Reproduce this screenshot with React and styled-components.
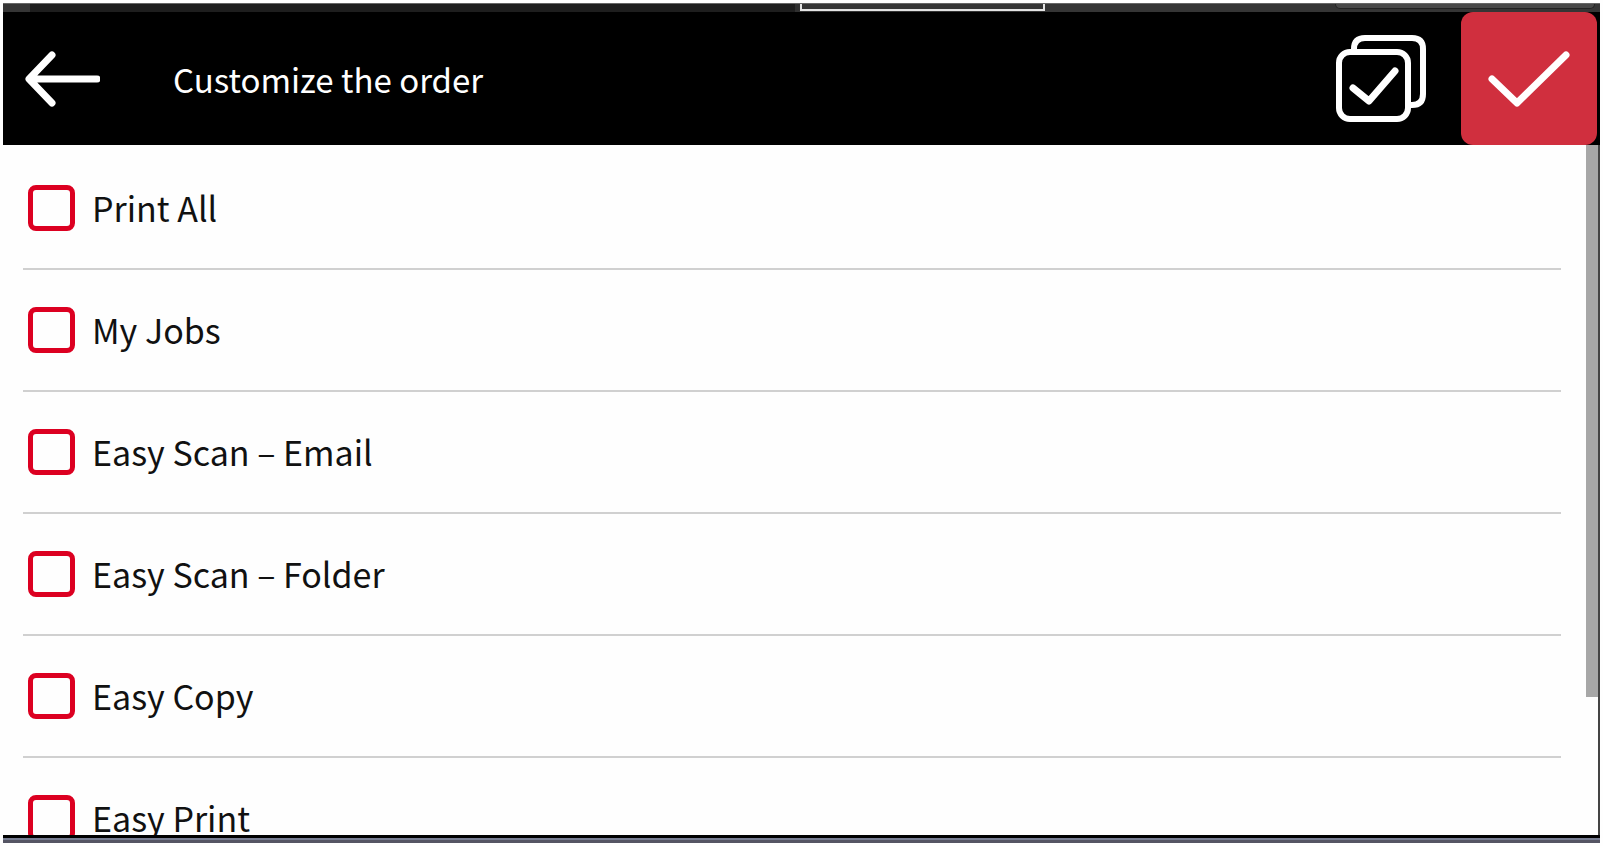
import { useState } from "react";
import styled, { createGlobalStyle } from "styled-components";

const GlobalStyle = createGlobalStyle`
  * {
    box-sizing: border-box;
  }

  body {
    margin: 0;
    background-color: #fefefe;
    font-family: "Noto Sans CJK JP", "Noto Sans", sans-serif;
  }
`;

const StyledScreen = styled.div`
  display: flex;
  flex-direction: column;
  height: 100vh;
  padding: 3px;
`;

const StyledStatusStrip = styled.div`
  display: flex;
  flex: none;
  height: 9px;
  background-color: #353535;
  border-top: 1px solid #666;
`;

const StyledStripPart = styled.div`
  flex: ${({ $grow }) => $grow} 1 0;
  background-color: ${({ $color }) => $color};
`;

const StyledStripTab = styled(StyledStripPart)`
  height: 7px;
  border: 2px solid #e4e4e4;
  border-top: none;
`;

const StyledStripPill = styled(StyledStripPart)`
  height: 5px;
  border: 1px solid #222;
  border-top: none;
  border-radius: 0 0 6px 6px;
`;

const StyledHeader = styled.header`
  display: flex;
  align-items: center;
  flex: none;
  height: 133px;
  padding-right: 3px;
  background-color: #000;
`;

const HeaderButton = styled.button`
  display: flex;
  align-items: center;
  justify-content: center;
  flex: none;
  width: ${({ $width }) => $width}px;
  height: 133px;
  padding: 0;
  border: none;
  border-radius: 12px;
  background-color: ${({ $primary }) => ($primary ? "#d02f3e" : "transparent")};
  cursor: pointer;
`;

const StyledIcon = styled.svg`
  display: block;
  fill: none;
  stroke: #fff;
  stroke-linecap: round;
  stroke-linejoin: round;
`;

const StyledTitle = styled.h1`
  flex: 1;
  margin: 0;
  padding-left: 53px;
  color: #fff;
  font-size: 33px;
  font-weight: 400;
  line-height: 48px;
`;

const StyledContent = styled.main`
  display: flex;
  flex: 1;
  min-height: 0;
  border-right: 2px solid #444;
  background-color: #fefefe;
`;

const StyledList = styled.ul`
  flex: 1;
  margin: 0;
  padding: 3px 25px 0 20px;
  overflow: hidden;
  list-style: none;
`;

const StyledRow = styled.li`
  height: 122px;
  border-bottom: 2px solid #d0d0d0;
`;

const StyledLabel = styled.label`
  display: flex;
  align-items: center;
  gap: 17px;
  height: 100%;
  padding-left: 5px;
  color: #111;
  font-size: 34px;
  line-height: 48px;
  cursor: pointer;
`;

const StyledCheckbox = styled.input`
  appearance: none;
  width: 47px;
  height: 46px;
  margin: 0;
  border: 5px solid #dc0021;
  border-radius: 8px;
  background-color: #fefefe;

  &:checked {
    background-color: #dc0021;
  }
`;

const StyledScrollTrack = styled.div`
  flex: none;
  width: 12px;
`;

const StyledScrollThumb = styled.div`
  height: 80%;
  background-color: #a7a7a7;
`;

const StyledFooter = styled.footer`
  flex: none;
  height: 8px;
  border-top: 3px solid #000;
  border-bottom: 3px solid #555564;
  background-color: #777d92;
`;

const apps = [
  "Print All",
  "My Jobs",
  "Easy Scan – Email",
  "Easy Scan – Folder",
  "Easy Copy",
  "Easy Print",
];

const App = () => {
  const [selected, setSelected] = useState([]);

  const toggle = (name) => {
    setSelected((prev) =>
      prev.includes(name) ? prev.filter((n) => n !== name) : [...prev, name]
    );
  };

  const toggleAll = () => {
    setSelected((prev) => (prev.length === apps.length ? [] : apps));
  };

  return (
    <StyledScreen>
      <GlobalStyle />
      <StyledStatusStrip>
        <StyledStripPart $grow={27} $color="#353535" />
        <StyledStripPart $grow={766} $color="#1e1e1e" />
        <StyledStripPart $grow={5} $color="#303030" />
        <StyledStripTab $grow={242} $color="#353535" />
        <StyledStripPart $grow={290} $color="#353535" />
        <StyledStripPill $grow={259} $color="#484848" />
        <StyledStripPart $grow={5} $color="#353535" />
      </StyledStatusStrip>
      <StyledHeader>
        <HeaderButton $width={117} aria-label="Back">
          <StyledIcon width="76" height="56" viewBox="0 0 76 56" strokeWidth="7">
            <path d="M28 4 L5 28 L28 52 M6 28 H73" />
          </StyledIcon>
        </HeaderButton>
        <StyledTitle>Customize the order</StyledTitle>
        <HeaderButton
          $width={161}
          aria-label="Select all"
          onClick={toggleAll}
        >
          <StyledIcon width="92" height="88" viewBox="0 0 92 88" strokeWidth="6">
            <rect x="4" y="17" width="69" height="67" rx="11" />
            <path
              strokeLinecap="butt"
              d="M19 15 V14 Q19 3 30 3 H77 Q88 3 88 14 V59 Q88 70 77 70 H74"
            />
            <path strokeWidth="7" d="M18 53 L34 66 L60 36" />
          </StyledIcon>
        </HeaderButton>
        <HeaderButton $width={136} $primary aria-label="Confirm">
          <StyledIcon width="82" height="58" viewBox="0 0 82 58" strokeWidth="7">
            <path d="M4 29 L29 53 L78 5" />
          </StyledIcon>
        </HeaderButton>
      </StyledHeader>
      <StyledContent>
        <StyledList>
          {apps.map((name) => (
            <StyledRow key={name}>
              <StyledLabel>
                <StyledCheckbox
                  type="checkbox"
                  checked={selected.includes(name)}
                  onChange={() => toggle(name)}
                />
                {name}
              </StyledLabel>
            </StyledRow>
          ))}
        </StyledList>
        <StyledScrollTrack>
          <StyledScrollThumb />
        </StyledScrollTrack>
      </StyledContent>
      <StyledFooter />
    </StyledScreen>
  );
};

export default App;
